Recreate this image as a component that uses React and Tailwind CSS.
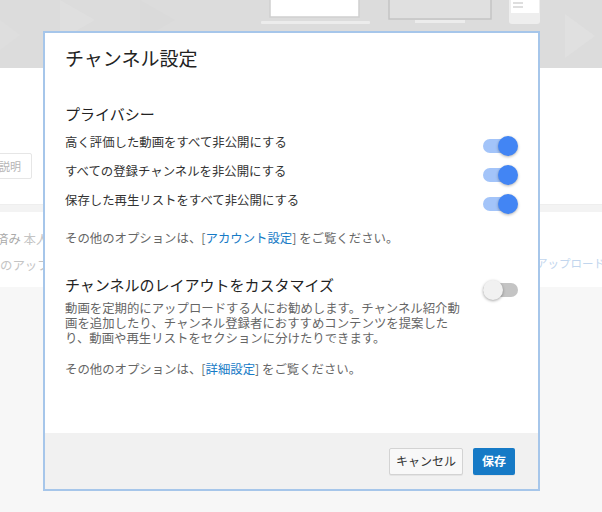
import React from "react";

function Toggle({ on }) {
  return (
    <div className="relative w-[35px] h-[20px] shrink-0">
      <div
        className={
          on
            ? "absolute left-0 right-[1px] top-[3px] h-[14px] rounded-full bg-[#a3c4f9]"
            : "absolute left-0 right-0 top-[3px] h-[14px] rounded-full bg-[#c4c4c4]"
        }
      />
      <div
        className={
          on
            ? "absolute right-0 top-0 w-[20px] h-[20px] rounded-full bg-[#4285f4] shadow-[0_1px_3px_rgba(0,0,0,0.3)]"
            : "absolute left-0 top-0 w-[20px] h-[20px] rounded-full bg-[#f1f1f1] shadow-[0_1px_3px_rgba(0,0,0,0.35)]"
        }
      />
    </div>
  );
}

function Banner() {
  return (
    <div className="h-[68px] bg-[#dcdcdc]">
      <svg width="602" height="68" viewBox="0 0 602 68">
        <rect width="602" height="68" fill="#dcdcdc" />
        <polygon points="60,0 95,20 60,40" fill="#dfdfdf" />
        <polygon points="140,0 175,20 140,40" fill="#dadada" />
        <polygon points="565,14 595,36 565,58" fill="#e0e0e0" />
        <polygon points="0,20 20,35 0,50" fill="#dedede" />
        {/* laptop */}
        <rect x="270" y="-3" width="89" height="20" fill="#ffffff" stroke="#cfcfcf" strokeWidth="1.5" />
        <rect x="261" y="21" width="109" height="3" rx="1" fill="#ececec" />
        {/* monitor */}
        <rect x="389" y="-3" width="102" height="22" fill="#e0e0e0" stroke="#c4c4c4" strokeWidth="1.5" />
        <rect x="415" y="20" width="50" height="3" fill="#ececec" />
        {/* phone */}
        <rect x="509" y="-6" width="31" height="30" rx="3" fill="#eeeeee" />
        <rect x="511" y="-4" width="28" height="17" fill="#ffffff" />
        <rect x="513" y="2" width="10" height="2" fill="#dedede" />
        <rect x="513" y="6" width="10" height="2" fill="#dedede" />
      </svg>
    </div>
  );
}

export default function App() {
  return (
    <div className="relative w-[602px] h-[512px] overflow-hidden bg-[#f7f7f7] font-['Noto_Sans_CJK_JP','Noto_Sans',sans-serif]">
      <Banner />
      <div className="flex justify-between">
        <div className="w-[43px] overflow-hidden">
          <div className="bg-white h-[219px] pt-[85px]">
            <div className="-ml-[20px] w-[52px] h-[26px] border border-[#e6e6e6] rounded-[2px] flex items-center justify-end pr-[10px] text-[11px] text-[#b5b5b5] whitespace-nowrap">
              説明
            </div>
            <div className="mt-[25px] border-t border-[#eeeeee] h-[8px] bg-[#f3f3f3]" />
            <div className="mt-[19px] -ml-[4px] whitespace-nowrap text-[12.4px] leading-[16px] text-[#aaaaaa]">
              済み <span className="text-[#c4c4c4]">本人</span>
            </div>
            <div className="mt-[10px] whitespace-nowrap text-[12.4px] leading-[16px] text-[#c4c4c4]">
              のアップ
            </div>
          </div>
        </div>
        <div className="w-[62px] overflow-hidden">
          <div className="bg-white h-[219px] pt-[136px]">
            <div className="border-t border-[#eeeeee] h-[8px] bg-[#f3f3f3]" />
            <div className="mt-[43px] -ml-[4px] whitespace-nowrap text-[11.5px] leading-[16px] text-[#c2d6ee]">
              アップロード
            </div>
          </div>
        </div>
      </div>

      <div className="absolute left-[43px] top-[31px] w-[497px] h-[460px] border-2 border-[#a6c6ea] bg-white flex flex-col">
        <div className="px-[20px] flex-1">
          <div className="mt-[13px] h-[24px] leading-[24px] text-[19px] text-[#222222]">
            チャンネル設定
          </div>
          <div className="mt-[34px] h-[20px] leading-[20px] text-[15px] text-[#222222]">
            プライバシー
          </div>
          <div className="mt-[4px]">
            {[
              "高く評価した動画をすべて非公開にする",
              "すべての登録チャンネルを非公開にする",
              "保存した再生リストをすべて非公開にする",
            ].map((t) => (
              <div key={t} className="h-[29px] flex items-center justify-between text-[12.4px] text-[#333333]">
                <span>{t}</span>
                <div className="mt-[6px]">
                  <Toggle on />
                </div>
              </div>
            ))}
          </div>
          <div className="mt-[15px] leading-[16px] text-[12.4px] text-[#666666]">
            その他のオプションは、[<span className="text-[#167ac6]">アカウント設定</span>] をご覧ください。
          </div>
          <div className="mt-[29px] flex justify-between">
            <div>
              <div className="h-[20px] leading-[20px] text-[15px] text-[#222222]">
                チャンネルのレイアウトをカスタマイズ
              </div>
              <div className="mt-[5.5px] leading-[15px] text-[12.4px] text-[#666666] whitespace-nowrap">
                動画を定期的にアップロードする人にお勧めします。チャンネル紹介動
                <br />
                画を追加したり、チャンネル登録者におすすめコンテンツを提案した
                <br />
                り、動画や再生リストをセクションに分けたりできます。
              </div>
            </div>
            <div className="mt-[5px]">
              <Toggle on={false} />
            </div>
          </div>
          <div className="mt-[15.5px] leading-[16px] text-[12.4px] text-[#666666]">
            その他のオプションは、[<span className="text-[#167ac6]">詳細設定</span>] をご覧ください。
          </div>
        </div>
        <div className="h-[56px] bg-[#f1f1f1] flex items-center justify-end gap-[10px] pr-[23px]">
          <button className="h-[27px] w-[74px] border border-[#d3d3d3] bg-[#f8f8f8] rounded-[2px] text-[12px] text-[#333333] shadow-[0_1px_0_rgba(0,0,0,0.05)]">
            キャンセル
          </button>
          <button className="h-[27px] w-[42px] bg-[#167ac6] rounded-[2px] text-[12px] font-bold text-white shadow-[0_1px_0_rgba(0,0,0,0.05)]">
            保存
          </button>
        </div>
      </div>
    </div>
  );
}
